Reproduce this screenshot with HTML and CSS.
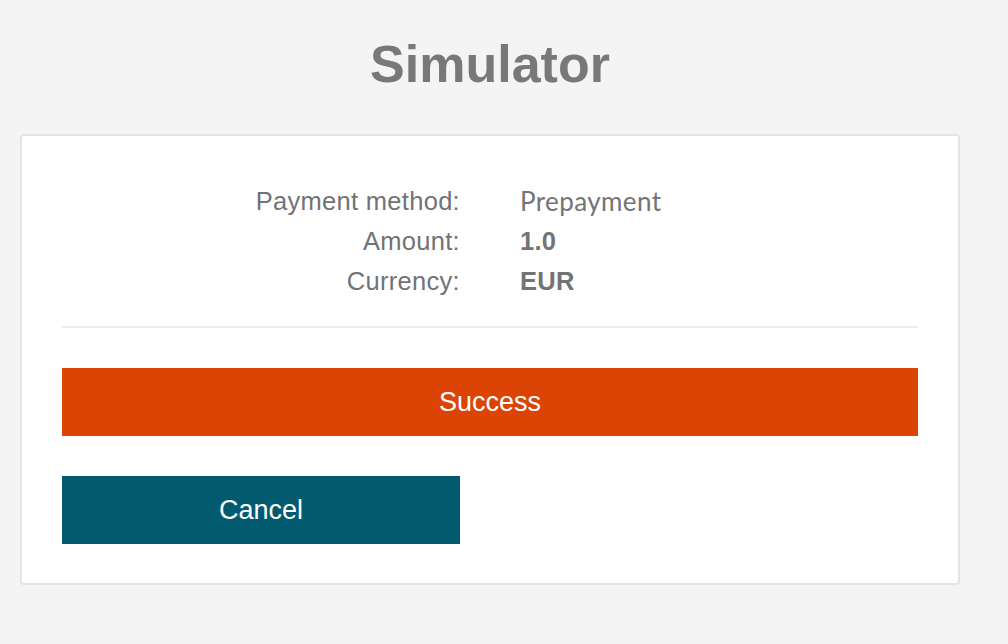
FILE: index.html
```html
<!DOCTYPE html>
<html lang="en">

<head>
    <meta charset="UTF-8">
    <meta name="viewport" content="width=device-width, initial-scale=1.0">
    <title>Simulator</title>
    <link rel="stylesheet" href="styles.css">
</head>

<body>

    <div class="wrapper">
        <h1 class="title">Simulator</h1>

        <div class="card">
            <div class="details">
                <div class="label">Payment method:</div>
                <div class="value method">Prepayment</div>
                <div class="label">Amount:</div>
                <div class="value strong">1.0</div>
                <div class="label">Currency:</div>
                <div class="value strong">EUR</div>
            </div>

            <hr class="divider">

            <button class="btn btn-success">Success</button>

            <div class="actions">
                <button class="btn btn-cancel">Cancel</button>
            </div>
        </div>
    </div>

</body>

</html>
```

FILE: styles.css
```css
/* Basic Reset */

* {
    box-sizing: border-box;
    margin: 0;
    padding: 0;
}

body {
    font-family: "Liberation Sans", Arial, sans-serif;
    background: #f4f4f4;
    color: #717376;
}

.wrapper {
    width: 940px;
    margin-left: 20px;
}
/* Heading */

.title {
    font-size: 52px;
    line-height: 58px;
    font-weight: bold;
    color: #76787a;
    text-align: center;
    margin-top: 35px;
    margin-bottom: 41px;
}
/* Card */

.card {
    background: #fff;
    border: 2px solid #e4e4e4;
    border-radius: 4px;
    padding: 45px 40px 39px;
}
/* Payment details */

.details {
    display: grid;
    grid-template-columns: 1fr 1fr;
    column-gap: 60px;
    font-size: 25.5px;
    line-height: 40px;
    letter-spacing: 0.3px;
}

.label {
    text-align: right;
}

.value.method {
    font-family: Lato, "Liberation Sans", sans-serif;
    font-size: 26px;
    letter-spacing: 0.4px;
    color: #727477;
}

.value.strong {
    font-weight: bold;
}

.divider {
    border: none;
    height: 2px;
    background: #ececec;
    margin: 25px 0 40px;
}
/* Buttons */

.btn {
    display: block;
    width: 100%;
    height: 68px;
    border: none;
    border-radius: 0;
    font-family: "Liberation Sans", Arial, sans-serif;
    font-size: 27px;
    color: #fff;
    cursor: pointer;
}

.btn-success {
    background: #dc4405;
}

.actions {
    display: grid;
    grid-template-columns: 1fr 1fr;
    column-gap: 60px;
    margin-top: 40px;
}

.btn-cancel {
    background: #025a6e;
}
```
